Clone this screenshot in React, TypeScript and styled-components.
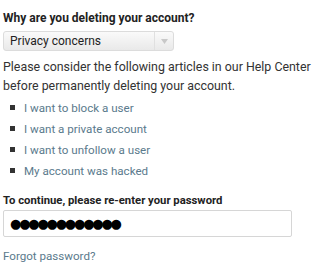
import React from "react";
import styled, { createGlobalStyle } from "styled-components";

const Global = createGlobalStyle`
  html, body { margin: 0; padding: 0; background: #fff; }
  body { font-family: Roboto, "Noto Sans", sans-serif; color: #2b2b2b; }
`;

const Page = styled.div`
  width: 317px;
  height: 276px;
  padding: 10px 3px 0 3px;
  box-sizing: border-box;
  overflow: hidden;
`;

const Label = styled.div<{ $size?: number }>`
  font-size: ${(p) => p.$size ?? 12}px;
  font-weight: 700;
  line-height: 16px;
  color: #222;
`;

const Select = styled.div`
  margin-top: 5px;
  width: 171px;
  height: 20px;
  box-sizing: border-box;
  border: 1px solid #dcdcdc;
  border-radius: 3px;
  background: linear-gradient(#fafafa, #e9e9e9);
  display: flex;
  align-items: stretch;
`;

const SelectText = styled.div`
  flex: 1;
  font-size: 12px;
  line-height: 18px;
  padding-left: 6px;
  color: #222;
`;

const Arrow = styled.div`
  width: 18px;
  border-left: 1px solid #e0e0e0;
  display: flex;
  align-items: center;
  justify-content: center;
`;

const Para = styled.p`
  margin: 6px 0 0 0;
  font-size: 12.4px;
  line-height: 19px;
  color: #333;
`;

const List = styled.ul`
  margin: 3px 0 0 0;
  padding: 0 0 0 7px;
  list-style: none;
  display: flex;
  flex-direction: column;
  gap: 2px;
`;

const Item = styled.li`
  display: flex;
  align-items: center;
  gap: 9px;
  height: 19px;
  font-size: 11.6px;
  color: #5a7a8c;
`;

const Bullet = styled.span`
  width: 5px;
  height: 5px;
  background: #333;
`;

const Label2 = styled(Label)`
  margin-top: 13px;
`;

const Input = styled.div`
  margin-top: 1px;
  width: 289px;
  height: 27px;
  box-sizing: border-box;
  border: 1px solid #d6d6d6;
  border-radius: 2px;
  display: flex;
  align-items: center;
  padding-left: 6px;
  font-family: "DejaVu Sans", sans-serif;
  font-size: 13px;
  letter-spacing: -2.2px;
  color: #000;
`;

const Forgot = styled.div`
  margin-top: 12px;
  font-size: 11.6px;
  color: #5a7a8c;
`;

const links = [
  "I want to block a user",
  "I want a private account",
  "I want to unfollow a user",
  "My account was hacked",
];

export default function App() {
  return (
    <Page>
      <Global />
      <Label>Why are you deleting your account?</Label>
      <Select>
        <SelectText>Privacy concerns</SelectText>
        <Arrow>
          <svg width="7" height="5" viewBox="0 0 7 5">
            <path d="M0 0 L7 0 L3.5 5 Z" fill="#c8c8c8" />
          </svg>
        </Arrow>
      </Select>
      <Para>
        Please consider the following articles in our Help Center before permanently deleting your account.
      </Para>
      <List>
        {links.map((l) => (
          <Item key={l}>
            <Bullet />
            {l}
          </Item>
        ))}
      </List>
      <Label2 $size={11.3}>To continue, please re-enter your password</Label2>
      <Input>●●●●●●●●●●●●</Input>
      <Forgot>Forgot password?</Forgot>
    </Page>
  );
}
